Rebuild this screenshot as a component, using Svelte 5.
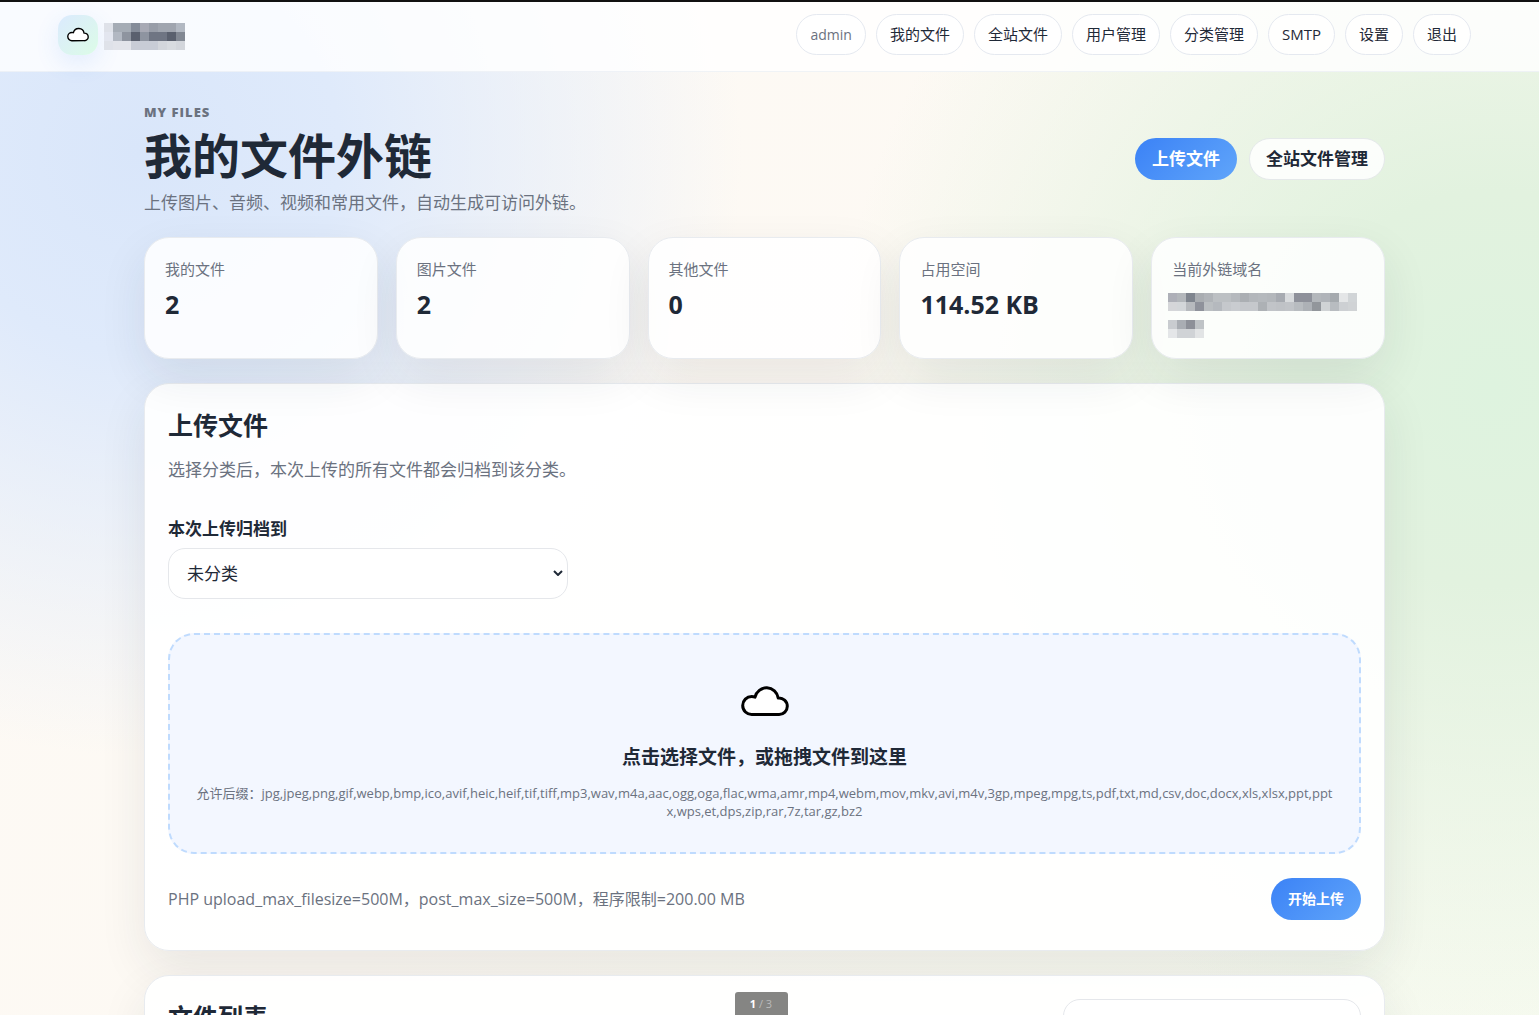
<script>
    const navLinks = ['我的文件', '全站文件', '用户管理', '分类管理', 'SMTP', '设置', '退出'];

    const stats = [
        { label: '我的文件', value: '2' },
        { label: '图片文件', value: '2' },
        { label: '其他文件', value: '0' },
        { label: '占用空间', value: '114.52 KB' }
    ];

    const extensions = 'jpg,jpeg,png,gif,webp,bmp,ico,avif,heic,heif,tif,tiff,mp3,wav,m4a,aac,ogg,oga,flac,wma,amr,mp4,webm,mov,mkv,avi,m4v,3gp,mpeg,mpg,ts,pdf,txt,md,csv,doc,docx,xls,xlsx,ppt,pptx,wps,et,dps,zip,rar,7z,tar,gz,bz2';

    // pixelated blocks that hide the site name and the domain
    const brandMask = [
        ['#dfe2e9', '#a5acb5', '#a5acb5', '#858c99', '#a7a9b4', '#989da8', '#a0a5af', '#a0a5af', '#b2b8c2'],
        ['#e3e6ef', '#b2b8c2', '#8e949f', '#5a606e', '#8e94a0', '#6f7583', '#6f7583', '#5a606e', '#828893'],
        ['#dfe2e9', '#e2e4ea', '#e2e4ea', '#c8ccd6', '#c8ccd6', '#c8ccd6', '#d3d6dc', '#d8dbe0', '#d3d6dc']
    ];
    const domainMask = [
        ['#aeb0b8', '#b3b7bb', '#7f858e', '#a9adb1', '#b0b4b8', '#bcc0c3', '#bcc0c3', '#b5b9bd', '#abafb3', '#b3b7bb', '#b5b9bd', '#b3b7bb', '#a7abb1', '#d8dbdd', '#8e919a', '#8e919a', '#b3b7bb', '#b0b4b9', '#a5aaae', '#e4e6e7', '#d1d5d7'],
        ['#d5d6d9', '#d3d6d9', '#b7babe', '#8f929b', '#bbbfc2', '#b5b9be', '#c5c8cc', '#c9ccd0', '#c5c8cc', '#c5c8cc', '#adb1b5', '#c1c4c8', '#bfc2c6', '#c1c4c8', '#b8bcc0', '#adb1b6', '#92969b', '#d0d3d5', '#b8bcc0', '#cdd0d3', '#d0d3d5'],
        [],
        ['#c9ccd0', '#a9adb3', '#8d9098', '#bfc3c6'],
        ['#e4e6e8', '#d0d3d6', '#d0d3d6', '#e2e4e5']
    ];
</script>

{#snippet cloud()}
    <svg class="cloud" viewBox="0 0 48 32" aria-hidden="true">
        <path d="M11 29.5a9 9 0 0 1-9.300-9a9 9 0 0 1 9-9q1.700 0 3.300.6A11.800 11.800 0 0 1 37.200 13a8.300 8.300 0 0 1 9.100 8.300a8.200 8.200 0 0 1-8.300 8.200z" />
    </svg>
{/snippet}

{#snippet mosaic(rows, cols)}
    <svg class="mosaic" width={cols * 9} height={rows.length * 9} shape-rendering="crispEdges" aria-hidden="true">
        {#each rows as row, y}
            {#each row as fill, x}
                <rect x={x * 9} y={y * 9} width="9" height="9" {fill} />
            {/each}
        {/each}
    </svg>
{/snippet}

<div class="page">
    <header>
        <a class="brand" href="#home" aria-label="首页">
            <span class="logo">{@render cloud()}</span>
            {@render mosaic(brandMask, 9)}
        </a>
        <nav>
            <span class="pill user">admin</span>
            {#each navLinks as link}
                <a class="pill" href="#nav">{link}</a>
            {/each}
        </nav>
    </header>

    <main>
        <section class="hero">
            <div>
                <p class="eyebrow">MY FILES</p>
                <h1>我的文件外链</h1>
                <p class="muted">上传图片、音频、视频和常用文件，自动生成可访问外链。</p>
            </div>
            <div class="actions">
                <a class="btn primary" href="#upload">上传文件</a>
                <a class="btn" href="#all">全站文件管理</a>
            </div>
        </section>

        <section class="stats">
            {#each stats as stat}
                <div class="stat">
                    <span>{stat.label}</span>
                    <strong>{stat.value}</strong>
                </div>
            {/each}
            <div class="stat domain">
                <span>当前外链域名</span>
                {@render mosaic(domainMask, 21)}
            </div>
        </section>

        <section class="panel" id="upload">
            <h2>上传文件</h2>
            <p class="muted">选择分类后，本次上传的所有文件都会归档到该分类。</p>

            <label class="field-label" for="category">本次上传归档到</label>
            <div class="select-wrap">
                <select id="category">
                    <option>未分类</option>
                </select>
                <svg viewBox="0 0 10 6" aria-hidden="true"><path d="M1 1l4 4l4-4" /></svg>
            </div>

            <button class="dropzone" type="button">
                {@render cloud()}
                <strong>点击选择文件，或拖拽文件到这里</strong>
                <small>允许后缀：{extensions}</small>
            </button>

            <div class="panel-foot">
                <p class="muted">PHP upload_max_filesize=500M，post_max_size=500M，程序限制=200.00 MB</p>
                <button class="btn primary small" type="button">开始上传</button>
            </div>
        </section>

        <section class="panel list-head">
            <h2>文件列表</h2>
            <input type="search" aria-label="搜索文件" />
        </section>
    </main>
</div>

<div class="pager"><b>1</b> / 3</div>

<style>
    :global(body) {
        height: 100vh;
        overflow: hidden;
        color: #1f2937;
        font: 17px/24px "Open Sans", "Noto Sans CJK SC", sans-serif;
    }

    .page {
        box-sizing: border-box;
        min-height: 100vh;
        padding-right: 10px;
        border-top: 2px solid #111;
        background:
            radial-gradient(circle at 9% 14%, #d9e6fa 0, #dfeafb 12%, transparent 36%),
            radial-gradient(circle at 97% 36%, #def3df 0, #e2f2df 12%, transparent 40%),
            linear-gradient(135deg, #fdfaf6 0%, #fdf9f3 50%, #f6faef 100%);
    }

    header {
        display: flex;
        justify-content: space-between;
        align-items: center;
        height: 70px;
        margin-right: -10px;
        padding: 0 68px 4px 58px;
        box-sizing: border-box;
        background: rgba(255, 255, 255, 0.82);
        border-bottom: 1px solid rgba(226, 232, 240, 0.5);
    }

    .brand {
        display: flex;
        align-items: center;
        gap: 6px;
    }

    .brand .mosaic {
        margin-top: 4px;
    }

    .logo {
        display: grid;
        place-items: center;
        width: 40px;
        height: 40px;
        border-radius: 14px;
        background: linear-gradient(135deg, #dbeafe, #dcfce7);
        box-shadow: 0 8px 24px rgba(59, 130, 246, 0.12);
    }

    .cloud {
        fill: #fff;
        stroke: #000;
        stroke-width: 3;
        stroke-linejoin: round;
    }

    .logo .cloud {
        width: 22px;
        height: 15px;
    }

    .mosaic {
        display: block;
    }

    nav {
        display: flex;
        gap: 10px;
    }

    .pill {
        padding: 8px 13px;
        border: 1px solid #e5e9f0;
        border-radius: 21px;
        background: rgba(255, 255, 255, 0.8);
        color: #1f2937;
        font-size: 15px;
        line-height: 23px;
        text-decoration: none;
    }

    .user {
        color: #6b7280;
        font-size: 14px;
    }

    main {
        max-width: 1241px;
        margin: 0 auto;
        padding-top: 30px;
    }

    p, h1, h2 {
        margin: 0;
    }

    .muted {
        color: #6b7280;
    }

    .hero {
        display: flex;
        justify-content: space-between;
        align-items: center;
        margin-bottom: 22px;
    }

    .eyebrow {
        color: #6b7280;
        font-size: 13px;
        font-weight: 800;
        line-height: 20px;
        letter-spacing: 1px;
    }

    h1 {
        margin: 2px 0 3px;
        font-size: 48px;
        line-height: 64px;
    }

    h2 {
        font-size: 25px;
        line-height: 36px;
    }

    .actions {
        display: flex;
        gap: 12px;
    }

    .btn {
        padding: 8px 16px;
        border: 1px solid #e5e9ea;
        border-radius: 21px;
        background: rgba(255, 255, 255, 0.85);
        color: #1f2937;
        font: inherit;
        font-weight: 700;
        text-decoration: none;
    }

    .primary {
        border-color: transparent;
        background: linear-gradient(135deg, #3b82f6, #60a5fa) border-box;
        color: #fff;
    }

    .small {
        font-size: 14px;
    }

    .stats {
        display: grid;
        grid-template-columns: repeat(5, 1fr);
        gap: 18px;
        margin-bottom: 24px;
    }

    .stat, .panel {
        box-sizing: border-box;
        border: 1px solid #e8ebef;
        border-radius: 25px;
        background: rgba(255, 255, 255, 0.86);
        box-shadow: 0 18px 48px rgba(31, 41, 55, 0.09);
    }

    .stat {
        min-height: 122px;
        padding: 20px;
    }

    .stat span {
        display: block;
        color: #6b7280;
        font-size: 15px;
        line-height: 22px;
    }

    .stat strong {
        display: block;
        margin-top: 6px;
        font-size: 25px;
        line-height: 36px;
    }

    .domain {
        padding: 20px 16px 0;
    }

    .domain span {
        margin: 0 0 13px 4px;
    }

    .panel {
        margin-bottom: 24px;
        padding: 23px;
        background: rgba(255, 255, 255, 0.92);
    }

    .panel h2 + .muted {
        margin: 15px 0 35px;
    }

    .field-label {
        display: block;
        margin-bottom: 7px;
        font-weight: 700;
    }

    .select-wrap {
        position: relative;
        width: 400px;
        max-width: 100%;
    }

    .select-wrap svg {
        position: absolute;
        top: 22px;
        right: 5px;
        width: 10px;
        height: 6px;
        fill: none;
        stroke: #1f2937;
        stroke-width: 2;
        pointer-events: none;
    }

    select, input {
        box-sizing: border-box;
        width: 100%;
        height: 51px;
        padding: 0 18px;
        border: 1px solid #e5e7eb;
        border-radius: 17px;
        background: #fff;
        color: #1f2937;
        font: inherit;
        appearance: none;
    }

    .dropzone {
        display: flex;
        flex-direction: column;
        align-items: center;
        box-sizing: border-box;
        width: 100%;
        margin: 34px 0 24px;
        padding: 50px 24px 32px;
        border: 2px dashed #bfdbfe;
        border-radius: 26px;
        background: #f3f7ff;
        color: #1f2937;
        font: inherit;
    }

    .dropzone .cloud {
        width: 48px;
        height: 32px;
    }

    .dropzone strong {
        margin: 26px 0 13px;
        font-size: 19px;
        line-height: 28px;
    }

    .dropzone small {
        color: #6b7280;
        font-size: 13px;
        line-height: 18px;
        word-break: break-all;
    }

    .panel-foot {
        display: flex;
        justify-content: space-between;
        align-items: center;
        margin-bottom: 7px;
    }

    .panel-foot .muted {
        font-size: 16px;
    }

    .list-head {
        display: flex;
        justify-content: space-between;
        align-items: flex-start;
    }

    .list-head input {
        width: 298px;
    }

    .pager {
        position: fixed;
        bottom: 0;
        left: 50%;
        width: 53px;
        margin-left: -35px;
        border-radius: 3px 3px 0 0;
        background: #858583;
        color: #bbb;
        font-size: 11px;
        line-height: 23px;
        text-align: center;
    }

    .pager b {
        color: #fff;
    }
</style>
